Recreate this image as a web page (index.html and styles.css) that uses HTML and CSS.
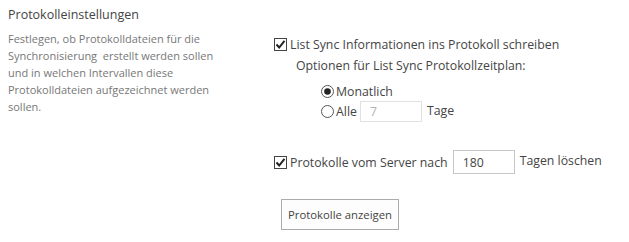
FILE: index.html
```html
<!DOCTYPE html>
<html lang="de">
<head>
<meta charset="utf-8">
<link rel="stylesheet" href="styles.css">
</head>
<body>
<div class="page">
  <div class="left">
    <h3 class="title">Protokolleinstellungen</h3>
    <p class="desc">Festlegen, ob Protokolldateien für die Synchronisierung&nbsp; erstellt werden sollen und in welchen Intervallen diese Protokolldateien aufgezeichnet werden sollen.</p>
  </div>
  <div class="right">
    <div class="row row-sync">
      <span class="cb"><svg width="13" height="13" viewBox="0 0 13 13"><rect x="0.5" y="0.5" width="12" height="12" fill="#fff" stroke="#444"/><path d="M2.5 6.5 L5.2 9.5 L10.5 2.8" fill="none" stroke="#222" stroke-width="2"/></svg></span>
      <span class="label">List Sync Informationen ins Protokoll schreiben</span>
    </div>
    <div class="options">Optionen für List Sync Protokollzeitplan:</div>
    <div class="radios">
      <div class="row radio-row">
        <span class="radio"><svg width="13" height="13" viewBox="0 0 13 13"><circle cx="6.5" cy="6.5" r="6" fill="#fff" stroke="#555"/><circle cx="6.5" cy="6.5" r="3.3" fill="#222"/></svg></span>
        <span class="label">Monatlich</span>
      </div>
      <div class="row radio-row">
        <span class="radio"><svg width="13" height="13" viewBox="0 0 13 13"><circle cx="6.5" cy="6.5" r="6" fill="#fff" stroke="#555"/></svg></span>
        <span class="label">Alle</span>
        <span class="input input-days disabled">7</span>
        <span class="label tage">Tage</span>
      </div>
    </div>
    <div class="row row-delete">
      <span class="cb"><svg width="13" height="13" viewBox="0 0 13 13"><rect x="0.5" y="0.5" width="12" height="12" fill="#fff" stroke="#444"/><path d="M2.5 6.5 L5.2 9.5 L10.5 2.8" fill="none" stroke="#222" stroke-width="2"/></svg></span>
      <span class="label">Protokolle vom Server nach</span>
      <span class="input input-server">180</span>
      <span class="label tagen">Tagen löschen</span>
    </div>
    <div class="btn-row">
      <button class="btn">Protokolle anzeigen</button>
    </div>
  </div>
</div>
</body>
</html>
```

FILE: styles.css
```css
* { box-sizing: border-box; }
html, body { margin: 0; padding: 0; background: #fff; }
body {
  font-family: "Open Sans", "Noto Sans", sans-serif;
  color: #444;
  width: 629px;
  height: 242px;
  overflow: hidden;
}
.page {
  display: flex;
  padding: 6px 0 0 8px;
}
.left {
  width: 266px;
  flex: none;
}
.title {
  margin: 0;
  font-weight: normal;
  font-size: 12.5px;
  line-height: 18px;
  color: #444;
}
.desc {
  margin: 6px 0 0 0;
  width: 222px;
  font-size: 11px;
  line-height: 17px;
  color: #777;
}
.right {
  display: flex;
  flex-direction: column;
  padding-top: 30px;
}
.row {
  display: flex;
  align-items: center;
  font-size: 12.3px;
  color: #444;
  white-space: nowrap;
}
.cb, .radio { display: inline-flex; flex: none; }
.cb { margin-right: 3px; }
.radio { margin-right: 2px; }
.row-sync { height: 16px; }
.options {
  margin: 5px 0 0 22px;
  font-size: 12.3px;
  line-height: 18px;
  color: #444;
}
.radios {
  margin: 6px 0 0 47px;
  display: flex;
  flex-direction: column;
}
.radio-row { height: 20px; }
.input {
  display: inline-flex;
  align-items: center;
  border: 1px solid #ababab;
  background: #fff;
  padding-left: 9px;
  font-size: 12.3px;
  color: #444;
}
.input-days {
  width: 62px;
  height: 21px;
  margin-left: 3px;
  border-color: #e1e1e1;
  color: #b1b1b1;
}
.tage { margin-left: 5px; margin-top: -2px; }
.row-delete {
  margin-top: 29px;
  height: 24px;
}
.input-server {
  width: 62px;
  height: 24px;
  margin-left: 5px;
  border-color: #c6c6c6;
}
.tagen { margin-left: 5px; margin-top: -4px; }
.btn-row { margin: 25px 0 0 7px; }
.btn {
  font-family: inherit;
  font-size: 11.3px;
  color: #444;
  background: #fdfdfd;
  border: 1px solid #ababab;
  width: 118px;
  height: 31px;
  padding: 0;
}
```
